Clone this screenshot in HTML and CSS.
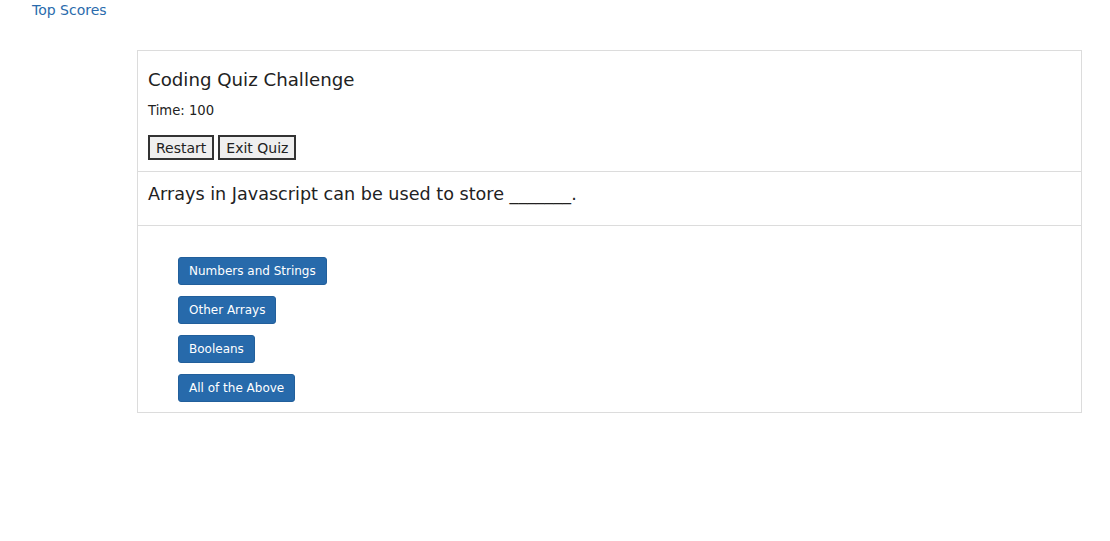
FILE: index.html
```html
<!DOCTYPE html>
<html>
<head>
<meta charset="utf-8">
<link rel="stylesheet" href="styles.css">
</head>
<body>
<nav class="topnav"><a class="top-link" href="#">Top Scores</a></nav>
<main class="card">
  <section class="card-header">
    <h2 class="title">Coding Quiz Challenge</h2>
    <p class="timer">Time: 100</p>
    <div class="controls"><button class="ctrl">Restart</button> <button class="ctrl">Exit Quiz</button></div>
  </section>
  <section class="question">
    <p class="question-text">Arrays in Javascript can be used to store _______.</p>
  </section>
  <section class="answers">
    <button class="answer">Numbers and Strings</button>
    <button class="answer">Other Arrays</button>
    <button class="answer">Booleans</button>
    <button class="answer">All of the Above</button>
  </section>
</main>
</body>
</html>
```
FILE: styles.css
```css
* { box-sizing: border-box; }
body {
  margin: 0;
  font-family: "DejaVu Sans", "Open Sans", sans-serif;
  color: #222;
  background: #fff;
}
.topnav {
  height: 20px;
  padding-left: 32px;
  line-height: 20px;
}
.top-link {
  color: #2a6bac;
  text-decoration: none;
  font-size: 14px;
}
.card {
  margin: 30px 28px 0 137px;
  border: 1px solid #dcdcdc;
}
.card-header {
  padding: 18px 10px 11px;
  border-bottom: 1px solid #dcdcdc;
}
.title {
  margin: 0;
  font-size: 18.2px;
  font-weight: normal;
  line-height: 22px;
}
.timer {
  margin: 10px 0 0;
  font-size: 13.2px;
  line-height: 20px;
}
.controls {
  margin-top: 14px;
  display: flex;
  gap: 4px;
}
.ctrl {
  height: 25px;
  padding: 0 6px;
  font-family: inherit;
  font-size: 14px;
  color: #222;
  background: #efefef;
  border: 2px solid #333;
}
.question {
  padding: 10px 10px 19px;
  border-bottom: 1px solid #dcdcdc;
}
.question-text {
  margin: 0;
  font-size: 17.6px;
  line-height: 24px;
}
.answers {
  padding: 31px 40px 10px;
  display: flex;
  flex-direction: column;
  align-items: flex-start;
  gap: 11px;
}
.answer {
  height: 28px;
  padding: 0 10px;
  font-family: inherit;
  font-size: 12px;
  color: #fff;
  background: #276aab;
  border: 1px solid #225f9b;
  border-radius: 3px;
}
```
